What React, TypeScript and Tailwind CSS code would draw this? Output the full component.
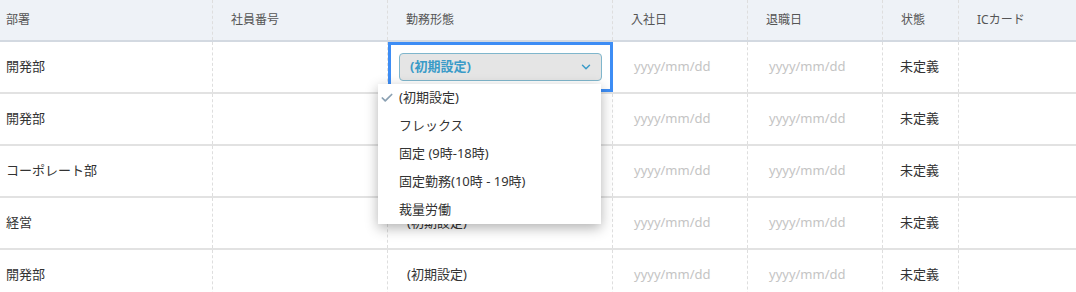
import { Check, ChevronDown } from 'lucide-react';

const columns = ['部署', '社員番号', '勤務形態', '入社日', '退職日', '状態', 'ICカード'];

// rows 2-3 work cells sit fully under the open menu
const rows = [
  { dept: '開発部', work: '(初期設定)' },
  { dept: '開発部', work: '' },
  { dept: 'コーポレート部', work: '' },
  { dept: '経営', work: '(初期設定)' },
  { dept: '開発部', work: '(初期設定)' },
];

const options = ['(初期設定)', 'フレックス', '固定 (9時-18時)', '固定勤務(10時 - 19時)', '裁量労働'];

const grid = 'grid grid-cols-[213px_175px_225px_135px_135px_76px_1fr]';
const cell = 'flex items-center border-r border-dashed border-[#dedede]';

export default function App() {
  return (
    <div
      className="relative w-[1076px] h-[292px] overflow-hidden bg-white text-[#333]"
      style={{ fontFamily: '"Noto Sans", "Noto Sans CJK JP", sans-serif' }}
    >
      {/* Header */}
      <div className={`${grid} h-[42px] bg-[#eef2f7] border-b-2 border-[#d3d9e1]`}>
        {columns.map((col, i) => (
          <div
            key={col}
            className={`${cell} text-[12px] text-[#555] ${i === 0 ? 'pl-[6px]' : 'pl-[18px]'} ${
              i === columns.length - 1 ? 'border-r-0' : ''
            }`}
          >
            {col}
          </div>
        ))}
      </div>

      {/* Body */}
      {rows.map((row, r) => (
        <div key={r} className={`${grid} h-[52px] border-b-2 border-[#e2e2e2]`}>
          <div className={`${cell} pl-[6px] text-[13px]`}>{row.dept}</div>
          <div className={cell} />
          {r === 0 ? (
            <div className="flex items-center border-[3px] border-[#3d8df5] pl-[8px] pr-[8px]">
              <div className="flex items-center justify-between w-full h-[28px] rounded-[4px] border border-[#7fb6cc] bg-[#e5e5e5] pl-[10px] pr-[8px]">
                <span className="text-[13px] font-bold text-[#3a9bc8]">{row.work}</span>
                <ChevronDown className="w-[14px] h-[14px] text-[#3a9bc8]" strokeWidth={2.5} />
              </div>
            </div>
          ) : (
            <div className={`${cell} pl-[19px] text-[13px]`}>{row.work}</div>
          )}
          <div className={`${cell} pl-[21px] text-[13px] text-[#c4c4c4]`}>yyyy/mm/dd</div>
          <div className={`${cell} pl-[21px] text-[13px] text-[#c4c4c4]`}>yyyy/mm/dd</div>
          <div className={`${cell} pl-[17px] text-[13px]`}>未定義</div>
          <div className="flex items-center" />
        </div>
      ))}

      {/* Dropdown menu */}
      <div className="absolute left-[378px] top-[84px] w-[223px] bg-white shadow-[0_4px_12px_rgba(0,0,0,0.3)]">
        {options.map((opt, i) => (
          <div key={opt} className="relative flex items-center h-[28px] pl-[21px] text-[13px] text-[#333]">
            {i === 0 && (
              <Check
                className="absolute left-[2px] w-[14px] h-[14px] text-[#8aa0b2]"
                strokeWidth={3}
              />
            )}
            {opt}
          </div>
        ))}
      </div>
    </div>
  );
}
